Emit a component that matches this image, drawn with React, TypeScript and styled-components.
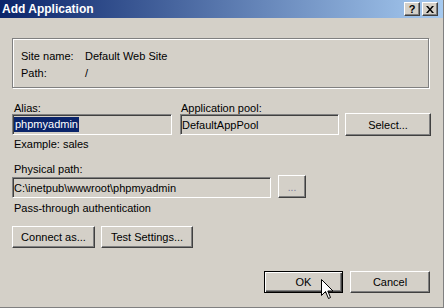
import React from 'react';
import styled, { createGlobalStyle } from 'styled-components';

const GlobalStyle = createGlobalStyle`
  html, body {
    margin: 0;
    padding: 0;
    background: #d4d0c8;
  }
  body {
    font-family: "Liberation Sans", Arial, sans-serif;
    font-size: 11px;
    color: #000;
  }
`;

const Window = styled.div`
  position: relative;
  box-sizing: border-box;
  width: 444px;
  height: 308px;
  background: #d4d0c8;
  border-right: 1px solid #808080;
  border-bottom: 1px solid #808080;
  display: flex;
  flex-direction: column;
  overflow: hidden;
`;

const TitleBar = styled.div`
  height: 18px;
  display: flex;
  align-items: center;
  justify-content: space-between;
  padding: 0 5px 0 2px;
  background: linear-gradient(to right, #0a246a, #a6caf0);
`;

const Title = styled.span`
  color: #fff;
  font-weight: bold;
  font-size: 12px;
  line-height: 18px;
`;

const CaptionButtons = styled.div`
  display: flex;
  gap: 2px;
`;

const CaptionButton = styled.div`
  box-sizing: border-box;
  width: 16px;
  height: 14px;
  background: #d4d0c8;
  border: 1px solid;
  border-color: #fff #404040 #404040 #fff;
  box-shadow: inset -1px -1px 0 #808080;
  display: flex;
  align-items: center;
  justify-content: center;
  font-weight: bold;
  font-size: 11px;
  line-height: 12px;
  color: #000;
`;

const Body = styled.div`
  display: flex;
  flex-direction: column;
  padding: 20px 14px 0 12px;
`;

const GroupBox = styled.div`
  box-sizing: border-box;
  height: 50px;
  border: 1px solid #808080;
  box-shadow: 1px 1px 0 #fff, inset 1px 1px 0 #fff;
  padding: 8px 8px 0;
  display: grid;
  grid-template-columns: 64px 1fr;
  grid-auto-rows: 17px;
  align-items: center;
`;

const Label = styled.div<{ $top?: number; $bottom?: number }>`
  line-height: 13px;
  padding-left: 2px;
  margin-top: ${p => p.$top ?? 0}px;
  margin-bottom: ${p => p.$bottom ?? 0}px;
  white-space: nowrap;
`;

const FieldsGrid = styled.div`
  margin-top: 12px;
  display: grid;
  grid-template-columns: 160px 159px 84px;
  column-gap: 8px;
  align-items: start;
`;

const PoolLabel = styled(Label)`
  padding-left: 1px;
`;

const TextBox = styled.div<{ $width?: number }>`
  box-sizing: border-box;
  height: 21px;
  margin-top: 1px;
  ${p => (p.$width ? `width: ${p.$width}px;` : '')}
  border: 1px solid;
  border-color: #808080 #fff #fff #808080;
  box-shadow: inset 1px 1px 0 #404040, inset -1px -1px 0 #d4d0c8;
  padding: 0 2px 0 1px;
  display: flex;
  align-items: center;
  white-space: nowrap;
  overflow: hidden;
`;

const Selected = styled.span`
  background: #0a246a;
  color: #fff;
  line-height: 15px;
  padding: 0 1px;
`;

const Button = styled.button<{ $width: number; $height?: number; $default?: boolean }>`
  box-sizing: border-box;
  width: ${p => p.$width}px;
  height: ${p => p.$height ?? 22}px;
  margin: 0;
  padding: 0;
  font-family: inherit;
  font-size: 11px;
  color: #000;
  background: #d4d0c8;
  border: 1px solid;
  border-color: ${p => (p.$default ? '#000' : '#fff #404040 #404040 #fff')};
  box-shadow: ${p =>
    p.$default
      ? 'inset 1px 1px 0 #fff, inset -1px -1px 0 #404040, inset -2px -2px 0 #808080'
      : 'inset -1px -1px 0 #808080'};
  display: flex;
  align-items: center;
  justify-content: center;
`;

const SelectButton = styled(Button)`
  margin-left: -2px;
`;

const PathRow = styled.div`
  display: flex;
  align-items: flex-start;
  gap: 7px;
`;

const PathBox = styled(TextBox)`
  margin-top: 2px;
`;

const Dots = styled.span`
  color: #77779a;
  font-size: 10px;
  margin-top: 2px;
`;

const ButtonRow = styled.div<{ $top: number; $end?: boolean }>`
  display: flex;
  gap: ${p => (p.$end ? 7 : 6)}px;
  margin-top: ${p => p.$top}px;
  justify-content: ${p => (p.$end ? 'flex-end' : 'flex-start')};
  ${p => (p.$end ? 'margin-right: -1px;' : '')}
`;

const Cursor = styled.svg`
  position: absolute;
  left: 321px;
  top: 279px;
`;

const CloseIcon = () => (
  <svg width="8" height="7" viewBox="0 0 8 7">
    <path d="M0 0h2l2 2.5L6 0h2L5 3.5 8 7H6L4 4.5 2 7H0l3-3.5z" fill="#000" />
  </svg>
);

const App: React.FC = () => {
  return (
    <>
      <GlobalStyle />
      <Window>
        <TitleBar>
          <Title>Add Application</Title>
          <CaptionButtons>
            <CaptionButton>?</CaptionButton>
            <CaptionButton>
              <CloseIcon />
            </CaptionButton>
          </CaptionButtons>
        </TitleBar>
        <Body>
          <GroupBox>
            <span>Site name:</span>
            <span>Default Web Site</span>
            <span>Path:</span>
            <span>/</span>
          </GroupBox>

          <FieldsGrid>
            <Label $top={2} $bottom={-2}>Alias:</Label>
            <PoolLabel $top={2} $bottom={-2}>Application pool:</PoolLabel>
            <span />
            <TextBox>
              <Selected>phpmyadmin</Selected>
            </TextBox>
            <TextBox>DefaultAppPool</TextBox>
            <SelectButton $width={86} $height={23}>
              Select...
            </SelectButton>
          </FieldsGrid>

          <Label $top={2}>Example: sales</Label>
          <Label $top={12} $bottom={-1}>Physical path:</Label>
          <PathRow>
            <PathBox $width={259}>C:\inetpub\wwwroot\phpmyadmin</PathBox>
            <Button $width={28} $height={23}>
              <Dots>...</Dots>
            </Button>
          </PathRow>
          <Label $top={4}>Pass-through authentication</Label>

          <ButtonRow $top={11}>
            <Button $width={83}>Connect as...</Button>
            <Button $width={92}>Test Settings...</Button>
          </ButtonRow>

          <ButtonRow $top={23} $end>
            <Button $width={79} $default>
              OK
            </Button>
            <Button $width={80}>Cancel</Button>
          </ButtonRow>
        </Body>
        <Cursor width="13" height="21" viewBox="0 0 13 21">
          <path
            d="M0.5 0.5 L0.5 16.5 L4.5 12.5 L7.5 19.5 L9.5 18.5 L6.8 12 L12 12 Z"
            fill="#fff"
            stroke="#000"
            strokeWidth="1"
          />
        </Cursor>
      </Window>
    </>
  );
};

export default App;
